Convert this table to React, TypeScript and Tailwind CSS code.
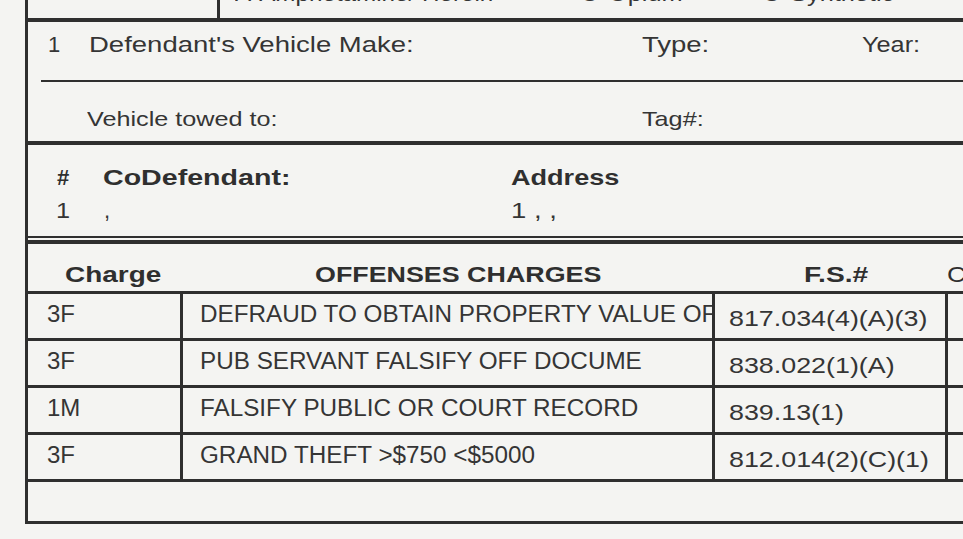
import React from "react";

const S = "inline-block whitespace-nowrap origin-left";

export default function App() {
  return (
    <div className="w-[963px] h-[539px] overflow-hidden bg-[#f4f4f2] font-['Liberation_Sans',Arial,sans-serif] text-[#353535]">
      <div className="ml-[25px] w-[1000px] h-[524px] border-l-[3px] border-b-[3px] border-[#2f2f2f] flex flex-col">
        {/* top cut-off row */}
        <div className="h-[22px] border-b-[4px] border-[#2f2f2f] flex overflow-hidden shrink-0">
          <div className="w-[192px] h-full border-r-[3px] border-[#2f2f2f] shrink-0" />
          <div className="flex text-[22px] leading-none -mt-[17px] pl-[15px]">
            <span className="w-[345px] shrink-0"><span className={`${S} scale-x-[1.1]`}>A-Amphetamine/ Heroin</span></span>
            <span className="w-[182px] shrink-0"><span className={`${S} scale-x-[1.15]`}>O-Opium</span></span>
            <span className="shrink-0"><span className={`${S} scale-x-[1.15]`}>O-Synthetic</span></span>
          </div>
        </div>

        {/* vehicle section */}
        <div className="border-b-[4px] border-[#2f2f2f] shrink-0">
          <div className="h-[58px] pt-[12px] pl-[20px] flex text-[22px] leading-none">
            <span className="w-[41px] shrink-0">1</span>
            <span className="w-[553px] shrink-0"><span className={`${S} scale-x-[1.25]`}>Defendant's Vehicle Make:</span></span>
            <span className="w-[220px] shrink-0"><span className={`${S} scale-x-[1.25]`}>Type:</span></span>
            <span className="shrink-0"><span className={`${S} scale-x-[1.15]`}>Year:</span></span>
          </div>
          <div className="ml-[13px] h-[61px] border-t-[2px] border-[#2f2f2f] pt-[26px] pl-[46px] flex text-[21px] leading-none">
            <span className="w-[555px] shrink-0"><span className={`${S} scale-x-[1.2]`}>Vehicle towed to:</span></span>
            <span className="shrink-0"><span className={`${S} scale-x-[1.2]`}>Tag#:</span></span>
          </div>
        </div>

        {/* co-defendant */}
        <div className="h-[91px] pt-[22px] shrink-0">
          <div className="flex pl-[29px] text-[22px] leading-none font-bold text-[#2f2f2f]">
            <span className="w-[46px] shrink-0">#</span>
            <span className="w-[408px] shrink-0"><span className={`${S} scale-x-[1.3]`}>CoDefendant:</span></span>
            <span className="shrink-0"><span className={`${S} scale-x-[1.23]`}>Address</span></span>
          </div>
          <div className="flex mt-[11px] pl-[28px] text-[22px] leading-none">
            <span className="w-[48px] shrink-0"><span className={`${S} scale-x-[1.15]`}>1</span></span>
            <span className="w-[407px] shrink-0">,</span>
            <span className="shrink-0"><span className={`${S} scale-x-[1.25]`}>1 , ,</span></span>
          </div>
        </div>
        <div className="h-[2px] bg-[#2f2f2f] shrink-0" />
        <div className="h-[2px] shrink-0" />

        {/* table header */}
        <div className="h-[54px] border-t-[4px] border-b-[3px] border-[#2f2f2f] pt-[20px] flex text-[22px] leading-none font-bold text-[#2f2f2f] shrink-0">
          <span className="w-[155px] pl-[37px] shrink-0"><span className={`${S} scale-x-[1.27]`}>Charge</span></span>
          <span className="w-[532px] pl-[132px] shrink-0"><span className={`${S} scale-x-[1.22]`}>OFFENSES CHARGES</span></span>
          <span className="w-[233px] pl-[89px] shrink-0"><span className={`${S} scale-x-[1.28]`}>F.S.#</span></span>
          <span className="shrink-0 -ml-[1px] font-normal"><span className={`${S} scale-x-[1.2]`}>C</span></span>
        </div>

        {/* rows */}
        {[
          ["3F", "DEFRAUD TO OBTAIN PROPERTY VALUE OF", "817.034(4)(A)(3)"],
          ["3F", "PUB SERVANT FALSIFY OFF DOCUME", "838.022(1)(A)"],
          ["1M", "FALSIFY PUBLIC OR COURT RECORD", "839.13(1)"],
          ["3F", "GRAND THEFT >$750 <$5000", "812.014(2)(C)(1)"],
        ].map((r, i) => (
          <div key={i} className="h-[47px] border-b-[3px] border-[#2f2f2f] flex shrink-0">
            <div className="w-[155px] border-r-[3px] border-[#2f2f2f] pl-[19px] pt-[8px] text-[24px] leading-none shrink-0">{r[0]}</div>
            <div className="w-[532px] border-r-[3px] border-[#2f2f2f] pl-[17px] pt-[9px] text-[23px] leading-none overflow-hidden whitespace-nowrap shrink-0">
              <span className={`${S} scale-x-[1.055]`}>{r[1]}</span>
            </div>
            <div className="w-[233px] border-r-[3px] border-[#2f2f2f] pl-[14px] pt-[14px] text-[22px] leading-none shrink-0">
              <span className={`${S} scale-x-[1.22]`}>{r[2]}</span>
            </div>
            <div className="flex-1" />
          </div>
        ))}
        <div className="flex-1" />
      </div>
    </div>
  );
}
